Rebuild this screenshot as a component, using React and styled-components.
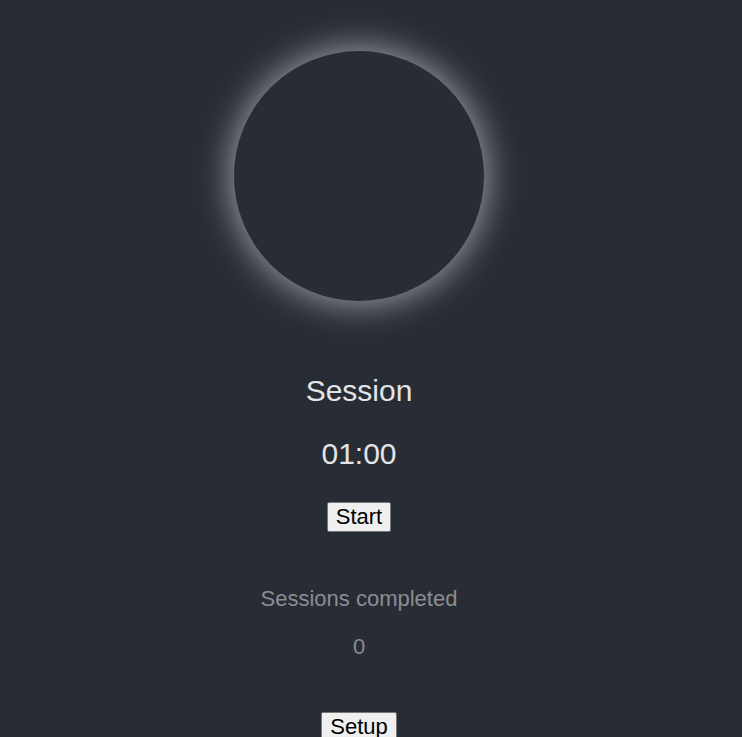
import React from "react";
import styled, { createGlobalStyle } from "styled-components";

const Global = createGlobalStyle`
  html, body { margin: 0; padding: 0; background: #282c34; }
  body { font-family: "Liberation Sans", Arial, sans-serif; }
`;

const Page = styled.div`
  width: 718px;
  min-height: 737px;
  display: flex;
  flex-direction: column;
  align-items: center;
  padding-top: 51px;
  box-sizing: border-box;
  text-align: center;
`;

const Ring = styled.div`
  width: 250px;
  height: 250px;
  border-radius: 50%;
  background: #282c34;
  box-shadow: 0 0 34px 3px rgba(255, 255, 255, 0.55);
`;

const Title = styled.div`
  color: #e2e4e8;
  font-size: 30px;
  line-height: 34px;
  margin-top: ${(p) => p.$mt}px;
`;

const Btn = styled.button`
  font-family: "Liberation Sans", Arial, sans-serif;
  font-size: 22px;
  background: #efefef;
  color: #000;
  border: 1px solid #767676;
  border-radius: 2px;
  padding: 1px 8px;
  height: 30px;
  line-height: 24px;
  margin-top: ${(p) => p.$mt}px;
`;

const Muted = styled.div`
  color: #8b8d91;
  font-size: 22px;
  line-height: 26px;
  margin-top: ${(p) => p.$mt}px;
`;

export default function App() {
  return (
    <>
      <Global />
      <Page>
        <Ring />
        <Title $mt={73}>Session</Title>
        <Title $mt={29}>01:00</Title>
        <Btn $mt={31}>Start</Btn>
        <Muted $mt={54}>Sessions completed</Muted>
        <Muted $mt={22}>0</Muted>
        <Btn $mt={52}>Setup</Btn>
      </Page>
    </>
  );
}
